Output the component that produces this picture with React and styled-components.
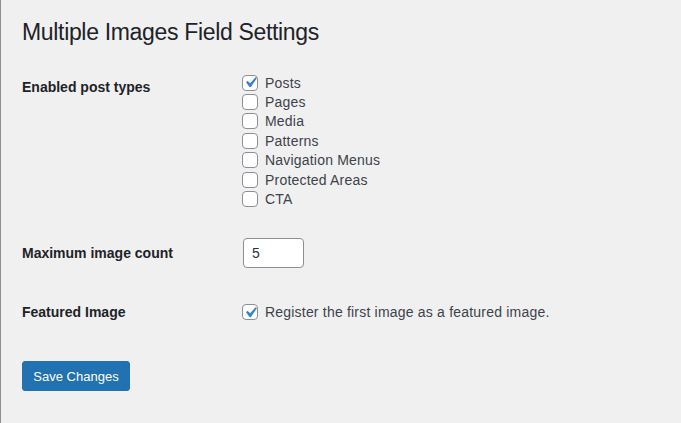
import React from 'react'
import styled, { createGlobalStyle } from 'styled-components'

const Global = createGlobalStyle`
  html, body {
    margin: 0;
    padding: 0;
    background: #f0f0f1;
  }
  body {
    font-family: "Liberation Sans", Arial, sans-serif;
    color: #3c434a;
  }
`

const postTypes = [
  { id: 'post', label: 'Posts', checked: true },
  { id: 'page', label: 'Pages' },
  { id: 'attachment', label: 'Media' },
  { id: 'wp_block', label: 'Patterns' },
  { id: 'wp_navigation', label: 'Navigation Menus' },
  { id: 'protected', label: 'Protected Areas' },
  { id: 'cta', label: 'CTA' },
]

const Check = ({ checked }) => (
  <Box>
    {checked && (
      <svg width="21" height="21" viewBox="0 0 20 20">
        <path d="M14.83 4.89l1.34.94-5.81 8.38H9.02L5.78 9.67l1.34-1.25 2.57 2.4z" fill="#3582c4" />
      </svg>
    )}
  </Box>
)

const App = () => {
  return (
    <Wrap>
      <Global />
      <Title>Multiple Images Field Settings</Title>

      <Row $first>
        <Label $top>Enabled post types</Label>
        <List>
          {postTypes.map(t => (
            <Option key={t.id}>
              <Check checked={t.checked} />
              {t.label}
            </Option>
          ))}
        </List>
      </Row>

      <Row $center $pad="19px 0 35px">
        <Label>Maximum image count</Label>
        <NumberInput defaultValue="5" />
      </Row>

      <Row $center $pad="0">
        <Label>Featured Image</Label>
        <Option>
          <Check checked />
          Register the first image as a featured image.
        </Option>
      </Row>

      <Submit>
        <Button>Save Changes</Button>
      </Submit>
    </Wrap>
  )
}

const Wrap = styled.div`
  min-height: 423px;
  box-sizing: border-box;
  border-left: 1px solid #8c8f94;
  padding: 18px 0 0 21px;
`

const Title = styled.h1`
  margin: 0;
  font-size: 23px;
  font-weight: 400;
  line-height: 1.3;
  letter-spacing: -0.33px;
  color: #1d2327;
`

const Row = styled.div`
  display: grid;
  grid-template-columns: 220px 1fr;
  align-items: ${p => (p.$center ? 'center' : 'start')};
  padding: ${p => p.$pad || '10px 0 10px'};
  margin-top: ${p => (p.$first ? '15px' : '0')};
`

const Label = styled.div`
  font-size: 14px;
  font-weight: 700;
  line-height: 1.3;
  color: #1d2327;
  padding-top: ${p => (p.$top ? '5px' : '0')};
`

const List = styled.div`
  display: flex;
  flex-direction: column;
`

const Option = styled.label`
  display: flex;
  align-items: center;
  gap: 7px;
  height: 19.4px;
  font-size: 14px;
  letter-spacing: 0.2px;
  color: #3c434a;
`

const Box = styled.span`
  box-sizing: border-box;
  width: 16px;
  height: 16px;
  flex: none;
  border: 1px solid #8c8f94;
  border-radius: 4px;
  background: #fff;
  display: flex;
  align-items: center;
  justify-content: center;
  overflow: visible;
  svg {
    flex: none;
    margin: -3px;
  }
`

const NumberInput = styled.input`
  box-sizing: border-box;
  width: 61px;
  height: 30px;
  margin-left: 1px;
  padding: 0 8px;
  border: 1px solid #8c8f94;
  border-radius: 4px;
  background: #fff;
  font-family: inherit;
  font-size: 14px;
  color: #2c3338;
  outline: none;
`

const Submit = styled.div`
  padding-top: 39px;
`

const Button = styled.button`
  box-sizing: border-box;
  height: 30px;
  width: 108px;
  padding: 0 10px;
  background: #2271b1;
  border: 1px solid #2271b1;
  border-radius: 3px;
  color: #fff;
  font-family: inherit;
  font-size: 13px;
  cursor: pointer;
`

export default App
